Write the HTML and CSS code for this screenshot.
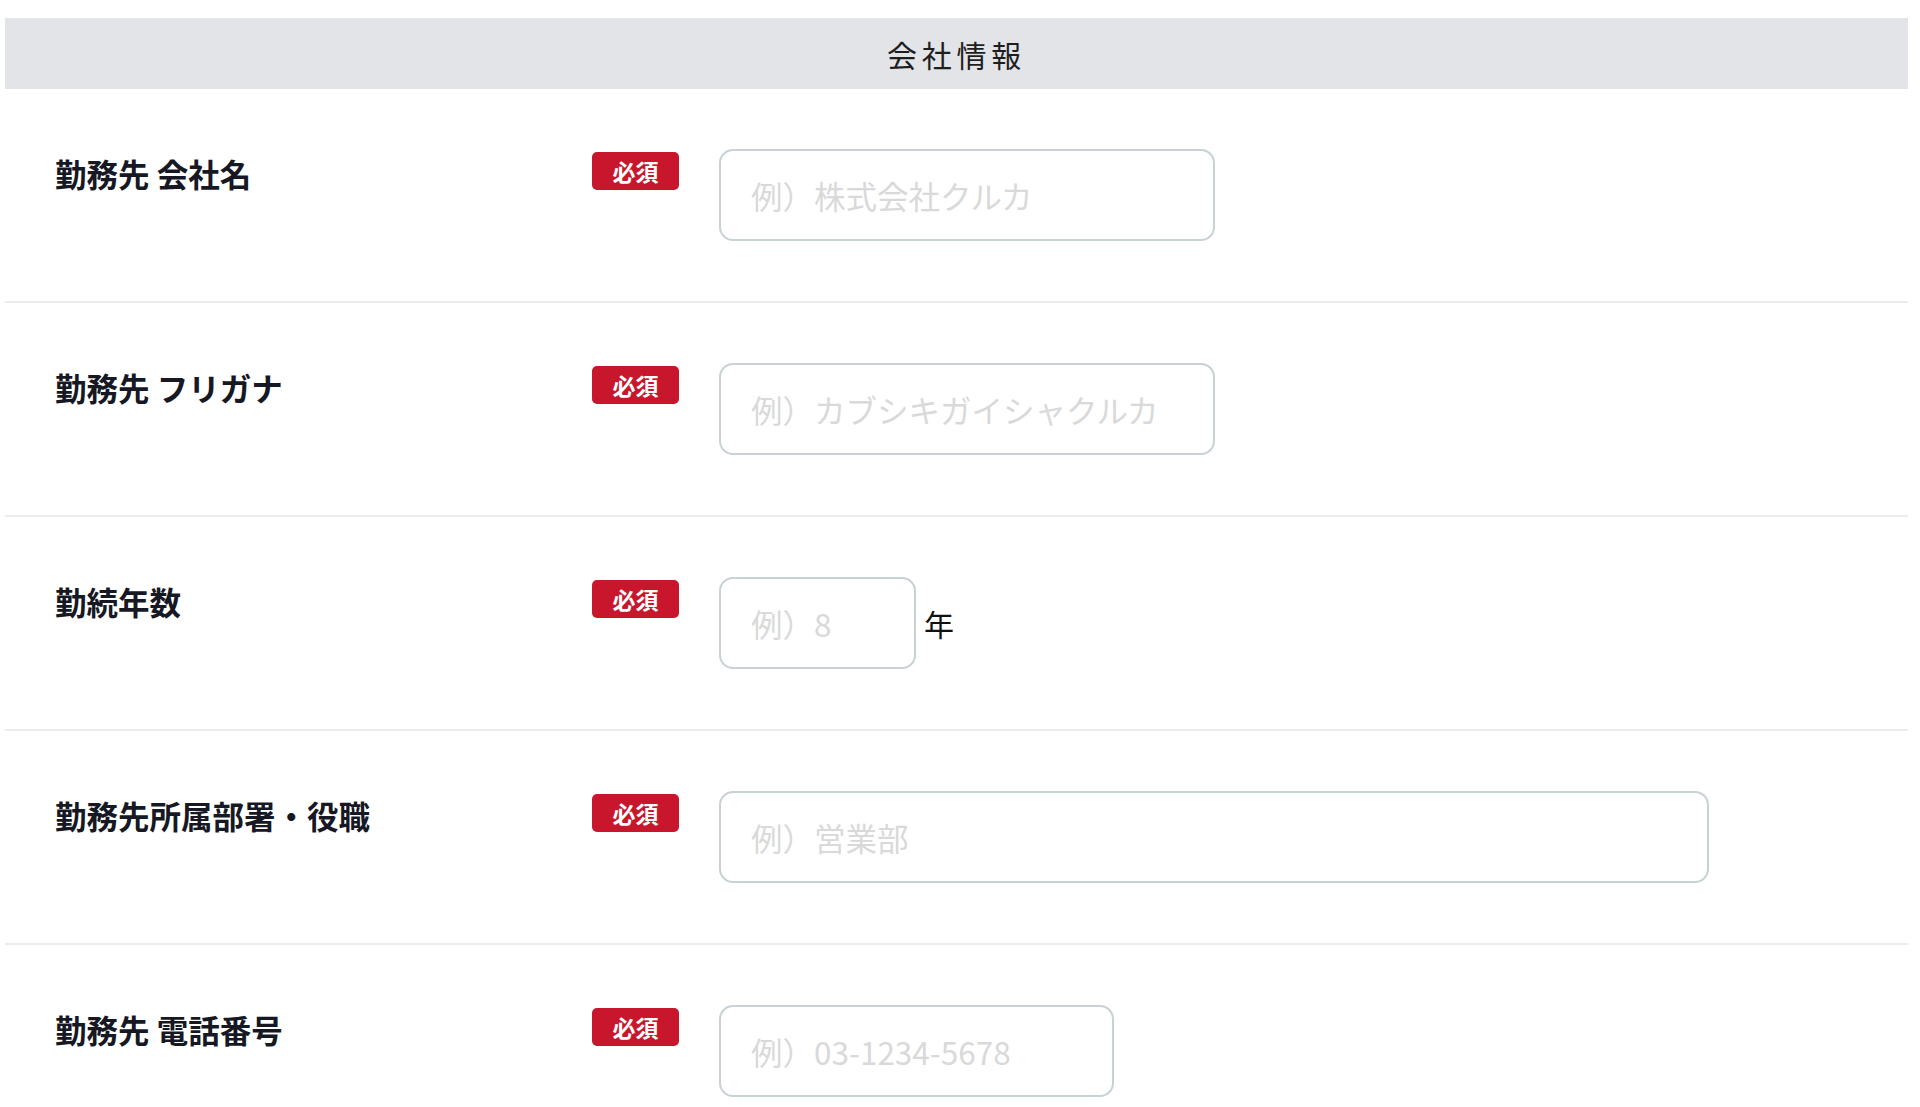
FILE: index.html
```html
<!DOCTYPE html>
<html lang="ja">

<head>
    <meta charset="UTF-8">
    <meta name="viewport" content="width=device-width, initial-scale=1.0">
    <title>会社情報</title>
    <link rel="stylesheet" href="styles.css">
</head>

<body>
    <div class="form">
        <h2 class="section-title">会社情報</h2>

        <div class="row">
            <div class="label">勤務先 会社名</div>
            <span class="required">必須</span>
            <div class="field">
                <input class="input input-md" type="text" placeholder="例）株式会社クルカ">
            </div>
        </div>

        <div class="row">
            <div class="label">勤務先 フリガナ</div>
            <span class="required">必須</span>
            <div class="field">
                <input class="input input-md" type="text" placeholder="例）カブシキガイシャクルカ">
            </div>
        </div>

        <div class="row">
            <div class="label">勤続年数</div>
            <span class="required">必須</span>
            <div class="field">
                <input class="input input-xs" type="text" placeholder="例）8">
                <span class="unit">年</span>
            </div>
        </div>

        <div class="row">
            <div class="label">勤務先所属部署・役職</div>
            <span class="required">必須</span>
            <div class="field">
                <input class="input input-lg" type="text" placeholder="例）営業部">
            </div>
        </div>

        <div class="row">
            <div class="label">勤務先 電話番号</div>
            <span class="required">必須</span>
            <div class="field">
                <input class="input input-sm" type="tel" placeholder="例）03-1234-5678">
            </div>
        </div>
    </div>
</body>

</html>
```

FILE: styles.css
```css
body {
    margin: 0;
    background-color: #fff;
    font-family: "Noto Sans CJK JP", "Noto Sans", sans-serif;
    color: #1a1a22;
}

.form {
    width: 1903px;
    margin: 18px 0 0 5px;
}

.section-title {
    margin: 0;
    height: 71px;
    display: flex;
    align-items: center;
    justify-content: center;
    background-color: #e3e4e8;
    font-size: 30px;
    font-weight: normal;
    letter-spacing: 0.16em;
    color: #1e1e1e;
}

.row {
    display: flex;
    align-items: flex-start;
    padding: 60px 0 60px 50px;
    border-bottom: 2px solid #ececec;
}

.label {
    width: 537px;
    flex: none;
    margin-top: 0;
    font-size: 31.5px;
    line-height: 48px;
    font-weight: bold;
    color: #161824;
}

.required {
    flex: none;
    width: 87px;
    height: 38px;
    margin-top: 3px;
    display: flex;
    align-items: center;
    justify-content: center;
    background-color: #c8172c;
    border-radius: 5px;
    color: #fff;
    font-size: 23px;
    font-weight: bold;
}

.field {
    display: flex;
    align-items: center;
    gap: 8px;
    margin-left: 40px;
}

.input {
    box-sizing: border-box;
    height: 92px;
    padding: 0 30px;
    border: 2px solid #c8d2d5;
    border-radius: 14px;
    font-family: "Noto Sans CJK JP", "Noto Sans", sans-serif;
    font-size: 31.5px;
    color: #222;
    background: #fff;
    outline: none;
}

.input::placeholder {
    color: #d9d9d9;
}

.input-xs {
    width: 197px;
}

.input-sm {
    width: 395px;
}

.input-md {
    width: 496px;
}

.input-lg {
    width: 990px;
}

.unit {
    font-size: 30px;
    color: #111;
}
```
